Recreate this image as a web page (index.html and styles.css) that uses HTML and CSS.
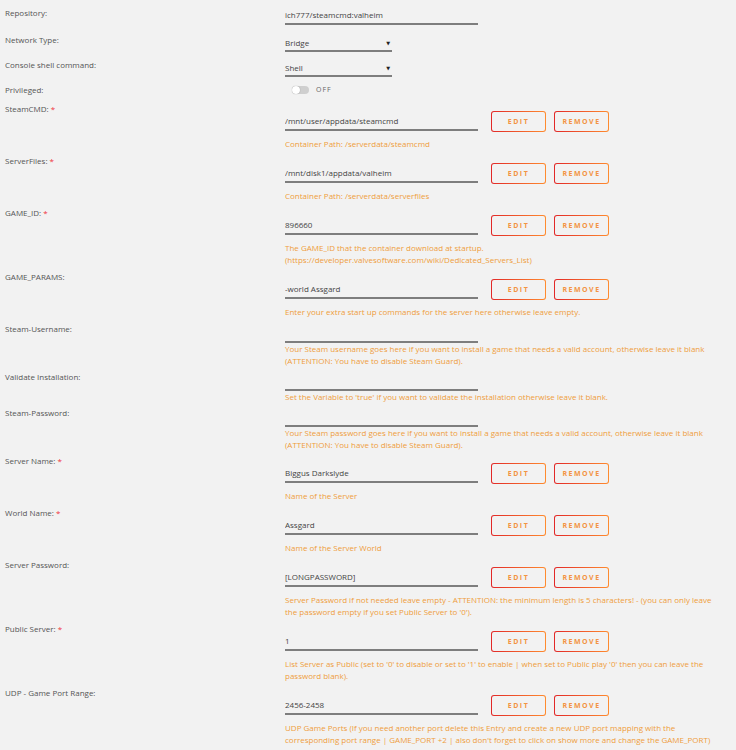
FILE: index.html
```html
<!DOCTYPE html>
<html lang="en">

<head>
    <meta charset="utf8">
    <title>Update Container</title>
    <link rel="stylesheet" href="styles.css">
</head>

<body>
    <form class="template">
        <div class="row top-input">
            <label>Repository:</label>
            <div class="field">
                <input type="text" value="ich777/steamcmd:valheim">
            </div>
        </div>
        <div class="row top-select">
            <label>Network Type:</label>
            <div class="field">
                <div class="select">Bridge</div>
            </div>
        </div>
        <div class="row top-select">
            <label>Console shell command:</label>
            <div class="field">
                <div class="select">Shell</div>
            </div>
        </div>
        <div class="row top-switch">
            <label>Privileged:</label>
            <div class="field">
                <span class="switch"><span class="knob"></span></span>
                <span class="switch-text">OFF</span>
            </div>
        </div>

        <div class="row config">
            <label>SteamCMD: <span class="req">*</span></label>
            <div class="field">
                <div class="line">
                    <input type="text" value="/mnt/user/appdata/steamcmd">
                    <button type="button">Edit</button>
                    <button type="button">Remove</button>
                </div>
                <p class="help">Container Path: /serverdata/steamcmd</p>
            </div>
        </div>
        <div class="row config">
            <label>ServerFiles: <span class="req">*</span></label>
            <div class="field">
                <div class="line">
                    <input type="text" value="/mnt/disk1/appdata/valheim">
                    <button type="button">Edit</button>
                    <button type="button">Remove</button>
                </div>
                <p class="help">Container Path: /serverdata/serverfiles</p>
            </div>
        </div>
        <div class="row config">
            <label>GAME_ID: <span class="req">*</span></label>
            <div class="field">
                <div class="line">
                    <input type="text" value="896660">
                    <button type="button">Edit</button>
                    <button type="button">Remove</button>
                </div>
                <p class="help">The GAME_ID that the container download at startup. (https://developer.valvesoftware.com/wiki/Dedicated_Servers_List)</p>
            </div>
        </div>
        <div class="row config">
            <label>GAME_PARAMS:</label>
            <div class="field">
                <div class="line">
                    <input type="text" value="-world Assgard">
                    <button type="button">Edit</button>
                    <button type="button">Remove</button>
                </div>
                <p class="help">Enter your extra start up commands for the server here otherwise leave empty.</p>
            </div>
        </div>

        <!-- hidden variables: no edit/remove -->
        <div class="row config plain">
            <label>Steam-Username:</label>
            <div class="field">
                <div class="line">
                    <input type="text" value="">
                </div>
                <p class="help">Your Steam username goes here if you want to install a game that needs a valid account, otherwise leave it blank (ATTENTION: You have to disable Steam Guard).</p>
            </div>
        </div>
        <div class="row config plain">
            <label>Validate Installation:</label>
            <div class="field">
                <div class="line">
                    <input type="text" value="">
                </div>
                <p class="help">Set the Variable to 'true' if you want to validate the installation otherwise leave it blank.</p>
            </div>
        </div>
        <div class="row config plain">
            <label>Steam-Password:</label>
            <div class="field">
                <div class="line">
                    <input type="text" value="">
                </div>
                <p class="help">Your Steam password goes here if you want to install a game that needs a valid account, otherwise leave it blank (ATTENTION: You have to disable Steam Guard).</p>
            </div>
        </div>

        <div class="row config">
            <label>Server Name: <span class="req">*</span></label>
            <div class="field">
                <div class="line">
                    <input type="text" value="Biggus Darkslyde">
                    <button type="button">Edit</button>
                    <button type="button">Remove</button>
                </div>
                <p class="help">Name of the Server</p>
            </div>
        </div>
        <div class="row config">
            <label>World Name: <span class="req">*</span></label>
            <div class="field">
                <div class="line">
                    <input type="text" value="Assgard">
                    <button type="button">Edit</button>
                    <button type="button">Remove</button>
                </div>
                <p class="help">Name of the Server World</p>
            </div>
        </div>
        <div class="row config">
            <label>Server Password:</label>
            <div class="field">
                <div class="line">
                    <input type="text" value="[LONGPASSWORD]">
                    <button type="button">Edit</button>
                    <button type="button">Remove</button>
                </div>
                <p class="help">Server Password if not needed leave empty - ATTENTION: the minimum length is 5 characters! - (you can only leave the password empty if you set Public Server to '0').</p>
            </div>
        </div>
        <div class="row config">
            <label>Public Server: <span class="req">*</span></label>
            <div class="field">
                <div class="line">
                    <input type="text" value="1">
                    <button type="button">Edit</button>
                    <button type="button">Remove</button>
                </div>
                <p class="help">List Server as Public (set to '0' to disable or set to '1' to enable | when set to Public play '0' then you can leave the password blank).</p>
            </div>
        </div>
        <div class="row config">
            <label>UDP - Game Port Range:</label>
            <div class="field">
                <div class="line">
                    <input type="text" value="2456-2458">
                    <button type="button">Edit</button>
                    <button type="button">Remove</button>
                </div>
                <p class="help">UDP Game Ports (If you need another port delete this Entry and create a new UDP port mapping with the corresponding port range | GAME_PORT +2 | also don't forget to click on show more and change the GAME_PORT)</p>
            </div>
        </div>
    </form>
</body>

</html>
```

FILE: styles.css
```css
* {
    box-sizing: border-box;
    margin: 0;
    padding: 0;
}

body {
    background-color: #f2f2f2;
    color: #4f4f4f;
    font-family: "Open Sans", "DejaVu Sans", sans-serif;
    font-size: 8px;
    line-height: 12px;
}

form.template {
    padding: 7px 5px 0 5px;
}

div.row {
    display: flex;
}

div.row label {
    width: 280px;
    flex-shrink: 0;
    color: #555;
}

div.row label span.req {
    color: #f0313b;
}

div.row div.field {
    flex-grow: 1;
}

div.row input {
    display: block;
    width: 193px;
    height: 17px;
    padding: 0 0 3px 0;
    border: 0 none;
    border-bottom: 2px solid #7e7e7e;
    background: transparent;
    color: #444;
    font-family: inherit;
    font-size: 8px;
    line-height: 12px;
    outline: none;
}

/* top part: repository, network, console, privileged */
div.row.top-input {
    height: 27px;
}

div.row.top-input input {
    margin-top: 1px;
}

div.row.top-select {
    height: 25px;
}

div.row.top-select div.select {
    position: relative;
    width: 107px;
    margin-top: 3px;
    padding-bottom: 1px;
    border-bottom: 2px solid #7e7e7e;
    color: #444;
}

div.row.top-select div.select:after {
    content: "\25BC";
    position: absolute;
    right: 2px;
    top: 0;
    font-size: 5px;
    color: #222;
}

div.row.top-switch {
    height: 19px;
}

div.row.top-switch div.field {
    display: flex;
    align-items: center;
    height: 12px;
    padding-left: 7px;
}

span.switch {
    display: inline-block;
    width: 17px;
    height: 8px;
    border-radius: 4px;
    background-color: #cfcfcf;
    position: relative;
}

span.switch span.knob {
    position: absolute;
    left: 0;
    top: 0;
    width: 8px;
    height: 8px;
    border-radius: 50%;
    background-color: #fff;
    box-shadow: 0 0 1px rgba(0, 0, 0, .4);
}

span.switch-text {
    margin-left: 7px;
    font-size: 7px;
    letter-spacing: 1px;
    color: #666;
}

/* template config entries */
div.row.config {
    padding-bottom: 5px;
}

div.row.config div.line {
    display: flex;
    align-items: flex-end;
    padding-top: 8px;
}

div.row.config div.line input {
    margin-bottom: 1px;
    margin-right: 13px;
}

div.row.config button {
    width: 55px;
    height: 21px;
    margin-right: 8px;
    border: 1px solid transparent;
    border-radius: 3px;
    background:
        linear-gradient(#f2f2f2, #f2f2f2) padding-box,
        linear-gradient(90deg, #e22828, #ff8c2f) border-box;
    color: #f39443;
    font-family: inherit;
    font-size: 7px;
    font-weight: 700;
    letter-spacing: 1.5px;
    text-transform: uppercase;
    cursor: pointer;
}

div.row.config p.help {
    width: 440px;
    margin-top: 6px;
    color: #ef9d3c;
}

div.row.config.plain {
    padding-bottom: 4px;
}

div.row.config.plain div.line {
    padding-top: 3px;
}

div.row.config.plain div.line input {
    margin-bottom: 0;
}

div.row.config.plain p.help {
    margin-top: 0;
}
```
